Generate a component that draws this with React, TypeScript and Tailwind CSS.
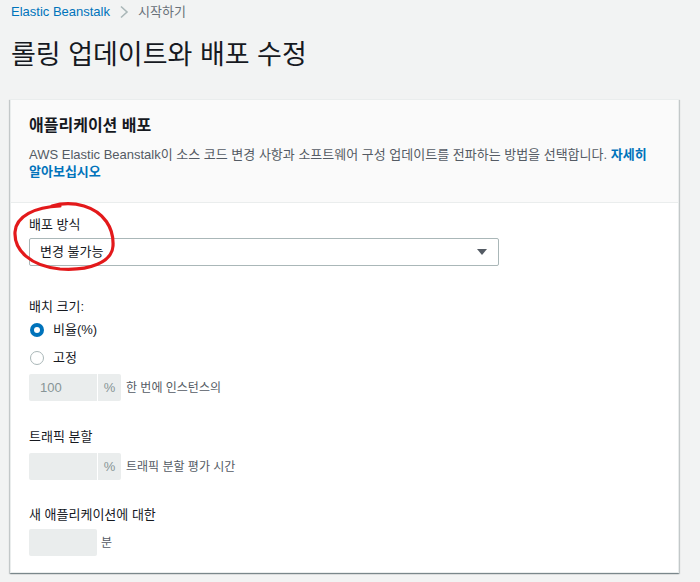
import React from 'react';

const font = { fontFamily: '"Liberation Sans", "Noto Sans CJK KR", sans-serif' };

function Radio({ checked, label }: { checked?: boolean; label: string }) {
  return (
    <div className="flex items-center h-[22px] gap-[9px]">
      {checked ? (
        <span className="w-[14px] h-[14px] rounded-full bg-[#0073bb] flex items-center justify-center">
          <span className="w-[6px] h-[6px] rounded-full bg-white" />
        </span>
      ) : (
        <span className="w-[14px] h-[14px] rounded-full border border-[#aab7b8] bg-white" />
      )}
      <span className="text-[13px] text-[#16191f]">{label}</span>
    </div>
  );
}

function SuffixInput({ value, suffix, hint }: { value?: string; suffix: string; hint: string }) {
  return (
    <div className="flex items-center h-[27px]">
      <div className="flex h-full">
        <div className="w-[68px] h-full bg-[#eaeded] rounded-l-[2px] flex items-center pl-[11px] text-[13px] text-[#879596]">
          {value}
        </div>
        <div className="w-[23px] h-full bg-[#eaeded] rounded-r-[2px] ml-px flex items-center justify-center text-[13px] text-[#879596]">
          {suffix}
        </div>
      </div>
      <span className="ml-[5px] text-[12px] text-[#545b64]">{hint}</span>
    </div>
  );
}

export default function App() {
  return (
    <div className="w-[700px] h-[582px] bg-[#f2f3f3] overflow-hidden relative" style={font}>
      {/* Breadcrumb */}
      <div className="h-[24px] pl-[11px] flex items-center text-[13px]">
        <span className="text-[#0073bb]">Elastic Beanstalk</span>
        <svg className="mx-[9px]" width="10" height="14" viewBox="0 0 10 14">
          <path d="M2 1.5 L8 7 L2 12.5" fill="none" stroke="#aab7b8" strokeWidth="1.6" />
        </svg>
        <span className="text-[#687078]">시작하기</span>
      </div>

      {/* Title */}
      <h1 className="pl-[11px] mt-[14px] h-[34px] flex items-center text-[27px] font-normal text-[#16191f]">
        롤링 업데이트와 배포 수정
      </h1>

      {/* Card */}
      <div className="ml-[10px] mt-[27px] w-[669px] bg-white border border-[#eaeded] shadow-[0_1px_1px_0_rgba(0,28,36,0.3),1px_1px_1px_0_rgba(0,28,36,0.15),-1px_1px_1px_0_rgba(0,28,36,0.15)]">
        <div className="bg-[#fafafa] border-b border-[#eaeded] pl-[18px] pr-[16px] pt-[15px] pb-[22px]">
          <h2 className="text-[16px] font-bold text-[#16191f] leading-[22px]">애플리케이션 배포</h2>
          <p className="mt-[9px] text-[13px] leading-[17px] text-[#545b64]">
            <span className="whitespace-nowrap">
              AWS Elastic Beanstalk이 소스 코드 변경 사항과 소프트웨어 구성 업데이트를 전파하는 방법을 선택합니다.{' '}
              <span className="text-[#0073bb] font-bold">자세히</span>
            </span>
            <br />
            <span className="text-[#0073bb] font-bold">알아보십시오</span>
          </p>
        </div>

        <div className="pl-[18px] pb-[16px] relative">
          {/* 배포 방식 */}
          <div className="pt-[12px] h-[32px] flex items-center text-[13px] text-[#16191f]">배포 방식</div>
          <div className="mt-[3px] w-[470px] h-[28px] border border-[#aab7b8] rounded-[2px] flex items-center justify-between pl-[10px] pr-[10px] text-[13px] text-[#16191f]">
            <span>변경 불가능</span>
            <svg width="12" height="8" viewBox="0 0 12 8">
              <path d="M1 1 L11 1 L6 7 Z" fill="#545b64" />
            </svg>
          </div>

          {/* 배치 크기 */}
          <div className="mt-[30px] h-[22px] flex items-center text-[13px] text-[#16191f]">배치 크기:</div>
          <div className="mt-px ml-px">
            <Radio checked label="비율(%)" />
            <div className="h-[6px]" />
            <Radio label="고정" />
          </div>
          <div className="mt-[5px]">
            <SuffixInput value="100" suffix="%" hint="한 번에 인스턴스의" />
          </div>

          {/* 트래픽 분할 */}
          <div className="mt-[25px] h-[22px] flex items-center text-[13px] text-[#16191f]">트래픽 분할</div>
          <div className="mt-[5px]">
            <SuffixInput suffix="%" hint="트래픽 분할 평가 시간" />
          </div>

          {/* 새 애플리케이션 */}
          <div className="mt-[24px] h-[22px] flex items-center text-[13px] text-[#16191f]">새 애플리케이션에 대한</div>
          <div className="mt-[3px] flex items-center h-[27px]">
            <div className="w-[68px] h-full bg-[#eaeded] rounded-[2px]" />
            <span className="ml-[4px] text-[12px] text-[#545b64]">분</span>
          </div>
        </div>
      </div>

      {/* Red annotation */}
      <svg className="absolute left-0 top-0 pointer-events-none" width="700" height="582" viewBox="0 0 700 582">
        <path
          d="M60 206 C 35 207, 16 216, 15 232 C 14 250, 30 266, 60 269 C 90 271, 112 262, 113 246 C 114 228, 104 212, 84 206 C 74 203, 62 203, 52 206"
          fill="none"
          stroke="#e3191b"
          strokeWidth="3.2"
          strokeLinecap="round"
        />
      </svg>
    </div>
  );
}
